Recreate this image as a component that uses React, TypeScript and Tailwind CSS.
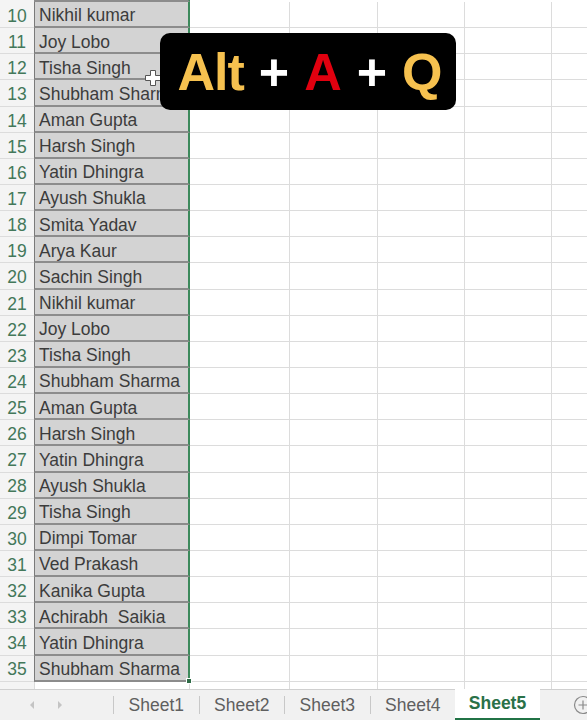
import React from "react";

const names = [
  "Nikhil kumar",
  "Joy Lobo",
  "Tisha Singh",
  "Shubham Sharma",
  "Aman Gupta",
  "Harsh Singh",
  "Yatin Dhingra",
  "Ayush Shukla",
  "Smita Yadav",
  "Arya Kaur",
  "Sachin Singh",
  "Nikhil kumar",
  "Joy Lobo",
  "Tisha Singh",
  "Shubham Sharma",
  "Aman Gupta",
  "Harsh Singh",
  "Yatin Dhingra",
  "Ayush Shukla",
  "Tisha Singh",
  "Dimpi Tomar",
  "Ved Prakash",
  "Kanika Gupta",
  "Achirabh  Saikia",
  "Yatin Dhingra",
  "Shubham Sharma",
];

const font = { fontFamily: '"Liberation Sans", Arial, sans-serif' };

function Row({ num, name, selected }: { num: number; name?: string; selected: boolean }) {
  return (
    <div className="flex h-[26.15px] shrink-0">
      <div className="w-[34px] shrink-0 border-b border-[#dcdcdc] bg-[#f4f4f4] flex items-center justify-center pt-[3px] text-[17.5px] text-[#43785a]">
        {num}
      </div>
      <div
        className={`w-[156px] shrink-0 flex items-center pl-[4px] pt-[3px] text-[17.5px] text-[#3c3c3c] whitespace-pre overflow-hidden ${
          selected
            ? "bg-[#d3d3d3] border-b-2 border-[#8c8c8c] border-l border-l-[#7a7a7a] border-r-2 border-r-[#3d8a5c]"
            : "bg-white border-b border-[#dcdcdc] border-l border-l-[#dcdcdc] border-r border-r-[#dcdcdc]"
        }`}
      >
        {name}
      </div>
      <div className="w-[100px] shrink-0 border-b border-r border-[#dcdcdc]" />
      <div className="w-[88px] shrink-0 border-b border-r border-[#dcdcdc]" />
      <div className="w-[87px] shrink-0 border-b border-r border-[#dcdcdc]" />
      <div className="w-[87px] shrink-0 border-b border-r border-[#dcdcdc]" />
      <div className="flex-1 border-b border-[#dcdcdc]" />
    </div>
  );
}

export default function App() {
  return (
    <div className="relative w-[587px] h-[720px] bg-white overflow-hidden flex flex-col" style={font}>
      {/* grid */}
      <div className="relative flex-1 overflow-hidden flex flex-col">
        <div className="flex h-[2px] shrink-0">
          <div className="w-[34px] bg-[#f4f4f4]" />
          <div className="w-[156px] bg-[#d3d3d3] border-b-2 border-[#8c8c8c] border-r-2 border-r-[#3d8a5c]" />
        </div>
        {names.map((n, i) => (
          <Row key={i} num={10 + i} name={n} selected />
        ))}
        <Row num={36} selected={false} />
        {/* fill handle */}
        <div className="absolute left-[186px] top-[678px] w-[6px] h-[6px] bg-[#2e6b46] border border-white" />
        {/* cell cursor */}
        <svg className="absolute left-[144px] top-[69px]" width="18" height="18" viewBox="0 0 18 18">
          <path d="M6.5 1.5h5v5h5v5h-5v5h-5v-5h-5v-5h5z" fill="#fff" stroke="#555" strokeWidth="1" />
        </svg>
      </div>

      {/* sheet tabs */}
      <div className="h-[31px] shrink-0 bg-[#f1f1f1] border-t border-[#d0d0d0] flex items-stretch text-[17.5px] text-[#5f5f5f]">
        <div className="w-[113px] flex items-center gap-[22px] pl-[29px]">
          <svg width="6" height="10" viewBox="0 0 6 10">
            <path d="M5 1L1 5l4 4z" fill="#c4c4c4" />
          </svg>
          <svg width="6" height="10" viewBox="0 0 6 10">
            <path d="M1 1l4 4-4 4z" fill="#c4c4c4" />
          </svg>
        </div>
        {["Sheet1", "Sheet2", "Sheet3", "Sheet4"].map((s) => (
          <div key={s} className="w-[85.5px] flex items-center justify-center">
            <span className="border-l border-[#c8c8c8] h-[18px] self-center" />
            <span className="flex-1 text-center">{s}</span>
          </div>
        ))}
        <div className="w-[85px] -mt-px bg-white border-b-2 border-[#217346] flex items-center justify-center font-bold text-[#2a7148]">
          Sheet5
        </div>
        <div className="flex-1 flex items-center justify-end">
          <svg width="20" height="20" viewBox="0 0 20 20" className="mr-[-6px]">
            <circle cx="10" cy="10" r="8.5" fill="none" stroke="#8a8a8a" strokeWidth="1.2" />
            <path d="M10 5.5v9M5.5 10h9" stroke="#8a8a8a" strokeWidth="1.2" />
          </svg>
        </div>
      </div>

      {/* shortcut overlay */}
      <div className="absolute left-[160px] top-[33px] w-[296px] h-[77px] bg-black rounded-[10px] flex items-center justify-center gap-[15px] pl-[4px] font-bold text-[52px] leading-none">
        <span className="text-[#f6c14f] tracking-[-1px]">Alt</span>
        <span className="text-white">+</span>
        <span className="text-[#e1000f]">A</span>
        <span className="text-white">+</span>
        <span className="text-[#f6c14f]">Q</span>
      </div>
    </div>
  );
}
